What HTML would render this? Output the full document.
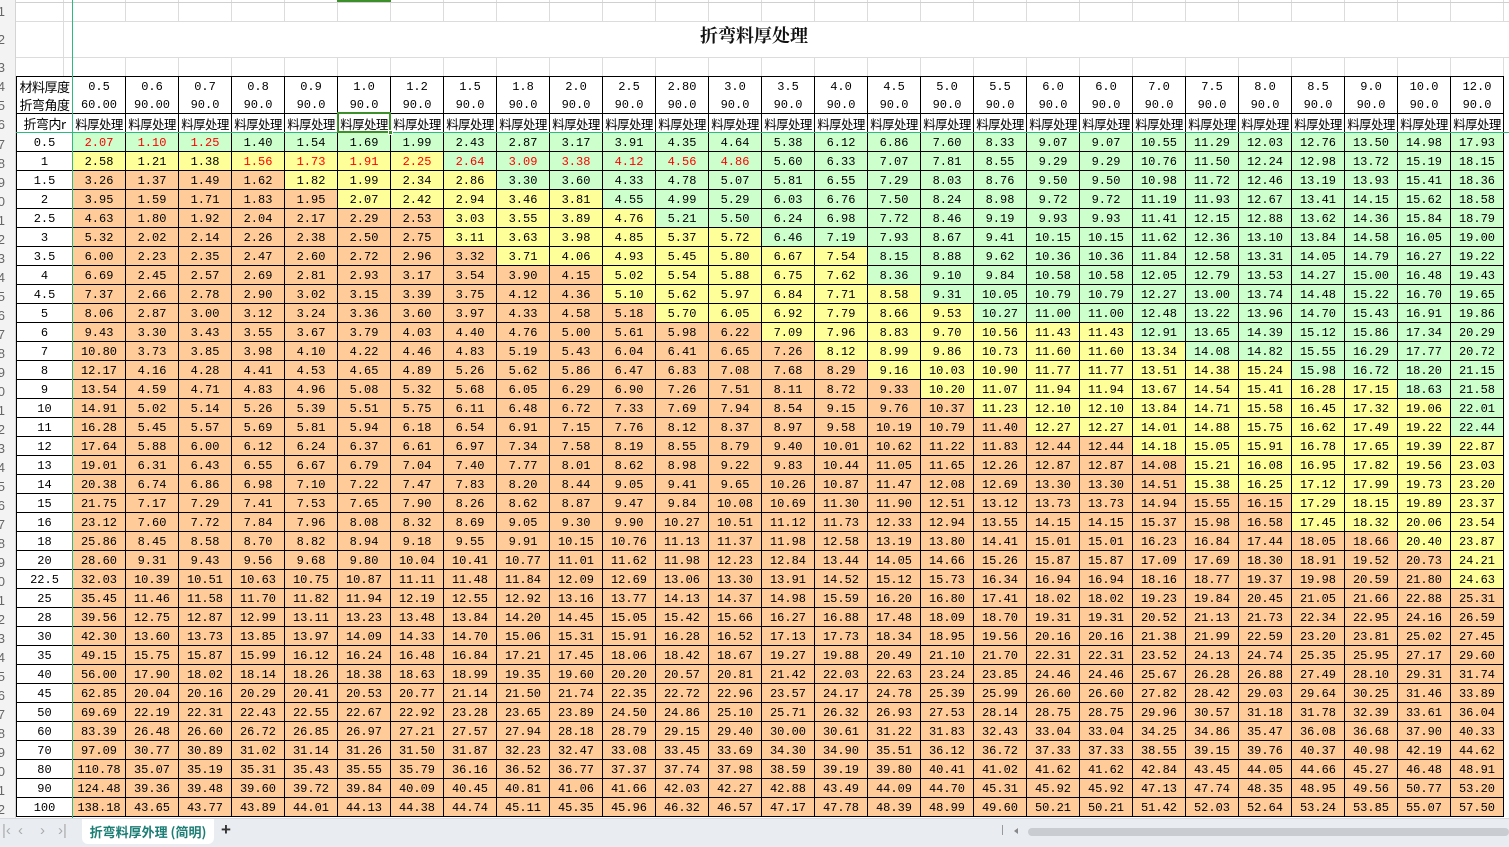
<!DOCTYPE html>
<html><head><meta charset="utf-8">
<style>
*{margin:0;padding:0;box-sizing:border-box}
body{width:1509px;height:847px;overflow:hidden;background:#fff;position:relative;font-family:"Liberation Mono","Noto Sans CJK SC",monospace}
.rh{position:absolute;left:0;top:0;width:16px;height:818px;background:#f3f3f3;border-right:1px solid #d4d4d4;overflow:hidden}
.rh div{position:absolute;left:-9px;width:14px;height:19px;font:13px "Liberation Sans",sans-serif;color:#666;text-align:right;line-height:19px}
.topgrid{position:absolute;left:16px;top:0;width:1493px;height:77px;
background:
linear-gradient(#fff,#fff) 56px 22px/1440px 35px no-repeat,
repeating-linear-gradient(90deg,transparent 0,transparent 55px,#dcdcdc 55px,#dcdcdc 56px) 1px 0/56px 77px no-repeat,
repeating-linear-gradient(90deg,transparent 0,transparent 52px,#dcdcdc 52px,#dcdcdc 53px) 57px 0/1440px 77px repeat-x;}
.hl{position:absolute;left:16px;width:1493px;height:1px;background:#dcdcdc}
.title{position:absolute;left:16px;top:22px;width:1476px;height:35px;text-align:center;line-height:35px;font:bold 18px "Noto Serif CJK SC","Noto Sans CJK SC",serif;color:#111}
table{position:absolute;left:16px;top:76px;border-collapse:collapse;table-layout:fixed;width:1487px}
td,th{border:1px solid #000;padding:2px 0 0;text-align:center;font-size:12px;font-weight:normal;white-space:nowrap;overflow:hidden;line-height:16px;color:#000}
th{background:#fff;font-family:"Liberation Mono","Noto Sans CJK SC",monospace}
tr{height:19px}
tr.h1 td,tr.h1 th{border-bottom:none}
tr.h2 td,tr.h2 th{border-top:none}
tr.h1,tr.h2{height:18.5px}
.lb{font-family:"Noto Sans CJK SC",sans-serif;font-size:13px;letter-spacing:-0.5px}
tr.h3 td{font-family:"Noto Sans CJK SC",sans-serif;font-size:12.5px;letter-spacing:-0.6px}
tbody td{background:#FFCC99}
td.r{color:#f00}
.r0 td{background:#CCFFCC}
.r1 td{background:#FFFF99}.r1 td:nth-child(n+9){background:#CCFFCC}
.r2 td:nth-child(n+6){background:#FFFF99}.r2 td:nth-child(n+10){background:#CCFFCC}
.r3 td:nth-child(n+7){background:#FFFF99}.r3 td:nth-child(n+12){background:#CCFFCC}
.r4 td:nth-child(n+9){background:#FFFF99}.r4 td:nth-child(n+13){background:#CCFFCC}
.r5 td:nth-child(n+9){background:#FFFF99}.r5 td:nth-child(n+15){background:#CCFFCC}
.r6 td:nth-child(n+10){background:#FFFF99}.r6 td:nth-child(n+17){background:#CCFFCC}
.r7 td:nth-child(n+12){background:#FFFF99}.r7 td:nth-child(n+17){background:#CCFFCC}
.r8 td:nth-child(n+12){background:#FFFF99}.r8 td:nth-child(n+18){background:#CCFFCC}
.r9 td:nth-child(n+13){background:#FFFF99}.r9 td:nth-child(n+19){background:#CCFFCC}
.r10 td:nth-child(n+15){background:#FFFF99}.r10 td:nth-child(n+22){background:#CCFFCC}
.r11 td:nth-child(n+16){background:#FFFF99}.r11 td:nth-child(n+23){background:#CCFFCC}
.r12 td:nth-child(n+17){background:#FFFF99}.r12 td:nth-child(n+25){background:#CCFFCC}
.r13 td:nth-child(n+18){background:#FFFF99}.r13 td:nth-child(n+27){background:#CCFFCC}
.r14 td:nth-child(n+19){background:#FFFF99}.r14 td:nth-child(n+28){background:#CCFFCC}
.r15 td:nth-child(n+20){background:#FFFF99}.r15 td:nth-child(n+28){background:#CCFFCC}
.r16 td:nth-child(n+22){background:#FFFF99}
.r17 td:nth-child(n+23){background:#FFFF99}
.r18 td:nth-child(n+23){background:#FFFF99}
.r19 td:nth-child(n+25){background:#FFFF99}
.r20 td:nth-child(n+25){background:#FFFF99}
.r21 td:nth-child(n+27){background:#FFFF99}
.r22 td:nth-child(n+28){background:#FFFF99}
.r23 td:nth-child(n+28){background:#FFFF99}
.fv{position:absolute;left:72px;top:0;width:1px;height:818px;background:#2fb980}
.fh{position:absolute;left:16px;top:132px;width:1493px;height:1px;background:#2fb980}
.sel{position:absolute;left:337px;top:112px;width:54px;height:21px;border:2px solid #3d8f2c}
.sel i{position:absolute;right:-4px;bottom:-4px;width:5px;height:5px;background:#3d8f2c;border:1px solid #fff}
.csel{position:absolute;left:337px;top:0;width:54px;height:2px;background:#3d8f2c}
.bar{position:absolute;left:0;top:818px;width:1509px;height:29px;background:#e9ecf1;border-top:1px solid #d6d9de}
.tab{position:absolute;left:82px;top:0;width:132px;height:25px;background:#fff;border-radius:0 0 6px 6px;font:bold 13px "Noto Sans CJK SC",sans-serif;color:#1b7d74;line-height:25px;text-align:center}
.nav{position:absolute;top:3px;font:15px "Liberation Sans",sans-serif;color:#aaa}
.plus{position:absolute;left:221px;top:1px;font:bold 17px "Liberation Sans",sans-serif;color:#333}
.sb{position:absolute;left:1028px;top:9px;width:481px;height:8px;background:#c9ccd1;border-radius:4px}
</style></head><body>
<div class="topgrid"></div>
<div class="hl" style="top:2px;background:#d0d0d0"></div>
<div class="hl" style="top:21px"></div>
<div class="hl" style="top:57px"></div>
<div class="title">折弯料厚处理</div>
<div class="csel"></div>
<table>
<colgroup><col style="width:56px"><col span="27" style="width:53px"></colgroup>
<thead>
<tr class="h1"><th class="lb">材料厚度</th><td>0.5</td><td>0.6</td><td>0.7</td><td>0.8</td><td>0.9</td><td>1.0</td><td>1.2</td><td>1.5</td><td>1.8</td><td>2.0</td><td>2.5</td><td>2.80</td><td>3.0</td><td>3.5</td><td>4.0</td><td>4.5</td><td>5.0</td><td>5.5</td><td>6.0</td><td>6.0</td><td>7.0</td><td>7.5</td><td>8.0</td><td>8.5</td><td>9.0</td><td>10.0</td><td>12.0</td></tr>
<tr class="h2"><th class="lb">折弯角度</th><td>60.00</td><td>90.00</td><td>90.0</td><td>90.0</td><td>90.0</td><td>90.0</td><td>90.0</td><td>90.0</td><td>90.0</td><td>90.0</td><td>90.0</td><td>90.0</td><td>90.0</td><td>90.0</td><td>90.0</td><td>90.0</td><td>90.0</td><td>90.0</td><td>90.0</td><td>90.0</td><td>90.0</td><td>90.0</td><td>90.0</td><td>90.0</td><td>90.0</td><td>90.0</td><td>90.0</td></tr>
<tr class="h3"><th class="lb">折弯内r</th><td>料厚处理</td><td>料厚处理</td><td>料厚处理</td><td>料厚处理</td><td>料厚处理</td><td>料厚处理</td><td>料厚处理</td><td>料厚处理</td><td>料厚处理</td><td>料厚处理</td><td>料厚处理</td><td>料厚处理</td><td>料厚处理</td><td>料厚处理</td><td>料厚处理</td><td>料厚处理</td><td>料厚处理</td><td>料厚处理</td><td>料厚处理</td><td>料厚处理</td><td>料厚处理</td><td>料厚处理</td><td>料厚处理</td><td>料厚处理</td><td>料厚处理</td><td>料厚处理</td><td>料厚处理</td></tr>
</thead>
<tbody>
<tr class="r0"><th>0.5</th><td class="r">2.07</td><td class="r">1.10</td><td class="r">1.25</td><td>1.40</td><td>1.54</td><td>1.69</td><td>1.99</td><td>2.43</td><td>2.87</td><td>3.17</td><td>3.91</td><td>4.35</td><td>4.64</td><td>5.38</td><td>6.12</td><td>6.86</td><td>7.60</td><td>8.33</td><td>9.07</td><td>9.07</td><td>10.55</td><td>11.29</td><td>12.03</td><td>12.76</td><td>13.50</td><td>14.98</td><td>17.93</td></tr>
<tr class="r1"><th>1</th><td>2.58</td><td>1.21</td><td>1.38</td><td class="r">1.56</td><td class="r">1.73</td><td class="r">1.91</td><td class="r">2.25</td><td class="r">2.64</td><td class="r">3.09</td><td class="r">3.38</td><td class="r">4.12</td><td class="r">4.56</td><td class="r">4.86</td><td>5.60</td><td>6.33</td><td>7.07</td><td>7.81</td><td>8.55</td><td>9.29</td><td>9.29</td><td>10.76</td><td>11.50</td><td>12.24</td><td>12.98</td><td>13.72</td><td>15.19</td><td>18.15</td></tr>
<tr class="r2"><th>1.5</th><td>3.26</td><td>1.37</td><td>1.49</td><td>1.62</td><td>1.82</td><td>1.99</td><td>2.34</td><td>2.86</td><td>3.30</td><td>3.60</td><td>4.33</td><td>4.78</td><td>5.07</td><td>5.81</td><td>6.55</td><td>7.29</td><td>8.03</td><td>8.76</td><td>9.50</td><td>9.50</td><td>10.98</td><td>11.72</td><td>12.46</td><td>13.19</td><td>13.93</td><td>15.41</td><td>18.36</td></tr>
<tr class="r3"><th>2</th><td>3.95</td><td>1.59</td><td>1.71</td><td>1.83</td><td>1.95</td><td>2.07</td><td>2.42</td><td>2.94</td><td>3.46</td><td>3.81</td><td>4.55</td><td>4.99</td><td>5.29</td><td>6.03</td><td>6.76</td><td>7.50</td><td>8.24</td><td>8.98</td><td>9.72</td><td>9.72</td><td>11.19</td><td>11.93</td><td>12.67</td><td>13.41</td><td>14.15</td><td>15.62</td><td>18.58</td></tr>
<tr class="r4"><th>2.5</th><td>4.63</td><td>1.80</td><td>1.92</td><td>2.04</td><td>2.17</td><td>2.29</td><td>2.53</td><td>3.03</td><td>3.55</td><td>3.89</td><td>4.76</td><td>5.21</td><td>5.50</td><td>6.24</td><td>6.98</td><td>7.72</td><td>8.46</td><td>9.19</td><td>9.93</td><td>9.93</td><td>11.41</td><td>12.15</td><td>12.88</td><td>13.62</td><td>14.36</td><td>15.84</td><td>18.79</td></tr>
<tr class="r5"><th>3</th><td>5.32</td><td>2.02</td><td>2.14</td><td>2.26</td><td>2.38</td><td>2.50</td><td>2.75</td><td>3.11</td><td>3.63</td><td>3.98</td><td>4.85</td><td>5.37</td><td>5.72</td><td>6.46</td><td>7.19</td><td>7.93</td><td>8.67</td><td>9.41</td><td>10.15</td><td>10.15</td><td>11.62</td><td>12.36</td><td>13.10</td><td>13.84</td><td>14.58</td><td>16.05</td><td>19.00</td></tr>
<tr class="r6"><th>3.5</th><td>6.00</td><td>2.23</td><td>2.35</td><td>2.47</td><td>2.60</td><td>2.72</td><td>2.96</td><td>3.32</td><td>3.71</td><td>4.06</td><td>4.93</td><td>5.45</td><td>5.80</td><td>6.67</td><td>7.54</td><td>8.15</td><td>8.88</td><td>9.62</td><td>10.36</td><td>10.36</td><td>11.84</td><td>12.58</td><td>13.31</td><td>14.05</td><td>14.79</td><td>16.27</td><td>19.22</td></tr>
<tr class="r7"><th>4</th><td>6.69</td><td>2.45</td><td>2.57</td><td>2.69</td><td>2.81</td><td>2.93</td><td>3.17</td><td>3.54</td><td>3.90</td><td>4.15</td><td>5.02</td><td>5.54</td><td>5.88</td><td>6.75</td><td>7.62</td><td>8.36</td><td>9.10</td><td>9.84</td><td>10.58</td><td>10.58</td><td>12.05</td><td>12.79</td><td>13.53</td><td>14.27</td><td>15.00</td><td>16.48</td><td>19.43</td></tr>
<tr class="r8"><th>4.5</th><td>7.37</td><td>2.66</td><td>2.78</td><td>2.90</td><td>3.02</td><td>3.15</td><td>3.39</td><td>3.75</td><td>4.12</td><td>4.36</td><td>5.10</td><td>5.62</td><td>5.97</td><td>6.84</td><td>7.71</td><td>8.58</td><td>9.31</td><td>10.05</td><td>10.79</td><td>10.79</td><td>12.27</td><td>13.00</td><td>13.74</td><td>14.48</td><td>15.22</td><td>16.70</td><td>19.65</td></tr>
<tr class="r9"><th>5</th><td>8.06</td><td>2.87</td><td>3.00</td><td>3.12</td><td>3.24</td><td>3.36</td><td>3.60</td><td>3.97</td><td>4.33</td><td>4.58</td><td>5.18</td><td>5.70</td><td>6.05</td><td>6.92</td><td>7.79</td><td>8.66</td><td>9.53</td><td>10.27</td><td>11.00</td><td>11.00</td><td>12.48</td><td>13.22</td><td>13.96</td><td>14.70</td><td>15.43</td><td>16.91</td><td>19.86</td></tr>
<tr class="r10"><th>6</th><td>9.43</td><td>3.30</td><td>3.43</td><td>3.55</td><td>3.67</td><td>3.79</td><td>4.03</td><td>4.40</td><td>4.76</td><td>5.00</td><td>5.61</td><td>5.98</td><td>6.22</td><td>7.09</td><td>7.96</td><td>8.83</td><td>9.70</td><td>10.56</td><td>11.43</td><td>11.43</td><td>12.91</td><td>13.65</td><td>14.39</td><td>15.12</td><td>15.86</td><td>17.34</td><td>20.29</td></tr>
<tr class="r11"><th>7</th><td>10.80</td><td>3.73</td><td>3.85</td><td>3.98</td><td>4.10</td><td>4.22</td><td>4.46</td><td>4.83</td><td>5.19</td><td>5.43</td><td>6.04</td><td>6.41</td><td>6.65</td><td>7.26</td><td>8.12</td><td>8.99</td><td>9.86</td><td>10.73</td><td>11.60</td><td>11.60</td><td>13.34</td><td>14.08</td><td>14.82</td><td>15.55</td><td>16.29</td><td>17.77</td><td>20.72</td></tr>
<tr class="r12"><th>8</th><td>12.17</td><td>4.16</td><td>4.28</td><td>4.41</td><td>4.53</td><td>4.65</td><td>4.89</td><td>5.26</td><td>5.62</td><td>5.86</td><td>6.47</td><td>6.83</td><td>7.08</td><td>7.68</td><td>8.29</td><td>9.16</td><td>10.03</td><td>10.90</td><td>11.77</td><td>11.77</td><td>13.51</td><td>14.38</td><td>15.24</td><td>15.98</td><td>16.72</td><td>18.20</td><td>21.15</td></tr>
<tr class="r13"><th>9</th><td>13.54</td><td>4.59</td><td>4.71</td><td>4.83</td><td>4.96</td><td>5.08</td><td>5.32</td><td>5.68</td><td>6.05</td><td>6.29</td><td>6.90</td><td>7.26</td><td>7.51</td><td>8.11</td><td>8.72</td><td>9.33</td><td>10.20</td><td>11.07</td><td>11.94</td><td>11.94</td><td>13.67</td><td>14.54</td><td>15.41</td><td>16.28</td><td>17.15</td><td>18.63</td><td>21.58</td></tr>
<tr class="r14"><th>10</th><td>14.91</td><td>5.02</td><td>5.14</td><td>5.26</td><td>5.39</td><td>5.51</td><td>5.75</td><td>6.11</td><td>6.48</td><td>6.72</td><td>7.33</td><td>7.69</td><td>7.94</td><td>8.54</td><td>9.15</td><td>9.76</td><td>10.37</td><td>11.23</td><td>12.10</td><td>12.10</td><td>13.84</td><td>14.71</td><td>15.58</td><td>16.45</td><td>17.32</td><td>19.06</td><td>22.01</td></tr>
<tr class="r15"><th>11</th><td>16.28</td><td>5.45</td><td>5.57</td><td>5.69</td><td>5.81</td><td>5.94</td><td>6.18</td><td>6.54</td><td>6.91</td><td>7.15</td><td>7.76</td><td>8.12</td><td>8.37</td><td>8.97</td><td>9.58</td><td>10.19</td><td>10.79</td><td>11.40</td><td>12.27</td><td>12.27</td><td>14.01</td><td>14.88</td><td>15.75</td><td>16.62</td><td>17.49</td><td>19.22</td><td>22.44</td></tr>
<tr class="r16"><th>12</th><td>17.64</td><td>5.88</td><td>6.00</td><td>6.12</td><td>6.24</td><td>6.37</td><td>6.61</td><td>6.97</td><td>7.34</td><td>7.58</td><td>8.19</td><td>8.55</td><td>8.79</td><td>9.40</td><td>10.01</td><td>10.62</td><td>11.22</td><td>11.83</td><td>12.44</td><td>12.44</td><td>14.18</td><td>15.05</td><td>15.91</td><td>16.78</td><td>17.65</td><td>19.39</td><td>22.87</td></tr>
<tr class="r17"><th>13</th><td>19.01</td><td>6.31</td><td>6.43</td><td>6.55</td><td>6.67</td><td>6.79</td><td>7.04</td><td>7.40</td><td>7.77</td><td>8.01</td><td>8.62</td><td>8.98</td><td>9.22</td><td>9.83</td><td>10.44</td><td>11.05</td><td>11.65</td><td>12.26</td><td>12.87</td><td>12.87</td><td>14.08</td><td>15.21</td><td>16.08</td><td>16.95</td><td>17.82</td><td>19.56</td><td>23.03</td></tr>
<tr class="r18"><th>14</th><td>20.38</td><td>6.74</td><td>6.86</td><td>6.98</td><td>7.10</td><td>7.22</td><td>7.47</td><td>7.83</td><td>8.20</td><td>8.44</td><td>9.05</td><td>9.41</td><td>9.65</td><td>10.26</td><td>10.87</td><td>11.47</td><td>12.08</td><td>12.69</td><td>13.30</td><td>13.30</td><td>14.51</td><td>15.38</td><td>16.25</td><td>17.12</td><td>17.99</td><td>19.73</td><td>23.20</td></tr>
<tr class="r19"><th>15</th><td>21.75</td><td>7.17</td><td>7.29</td><td>7.41</td><td>7.53</td><td>7.65</td><td>7.90</td><td>8.26</td><td>8.62</td><td>8.87</td><td>9.47</td><td>9.84</td><td>10.08</td><td>10.69</td><td>11.30</td><td>11.90</td><td>12.51</td><td>13.12</td><td>13.73</td><td>13.73</td><td>14.94</td><td>15.55</td><td>16.15</td><td>17.29</td><td>18.15</td><td>19.89</td><td>23.37</td></tr>
<tr class="r20"><th>16</th><td>23.12</td><td>7.60</td><td>7.72</td><td>7.84</td><td>7.96</td><td>8.08</td><td>8.32</td><td>8.69</td><td>9.05</td><td>9.30</td><td>9.90</td><td>10.27</td><td>10.51</td><td>11.12</td><td>11.73</td><td>12.33</td><td>12.94</td><td>13.55</td><td>14.15</td><td>14.15</td><td>15.37</td><td>15.98</td><td>16.58</td><td>17.45</td><td>18.32</td><td>20.06</td><td>23.54</td></tr>
<tr class="r21"><th>18</th><td>25.86</td><td>8.45</td><td>8.58</td><td>8.70</td><td>8.82</td><td>8.94</td><td>9.18</td><td>9.55</td><td>9.91</td><td>10.15</td><td>10.76</td><td>11.13</td><td>11.37</td><td>11.98</td><td>12.58</td><td>13.19</td><td>13.80</td><td>14.41</td><td>15.01</td><td>15.01</td><td>16.23</td><td>16.84</td><td>17.44</td><td>18.05</td><td>18.66</td><td>20.40</td><td>23.87</td></tr>
<tr class="r22"><th>20</th><td>28.60</td><td>9.31</td><td>9.43</td><td>9.56</td><td>9.68</td><td>9.80</td><td>10.04</td><td>10.41</td><td>10.77</td><td>11.01</td><td>11.62</td><td>11.98</td><td>12.23</td><td>12.84</td><td>13.44</td><td>14.05</td><td>14.66</td><td>15.26</td><td>15.87</td><td>15.87</td><td>17.09</td><td>17.69</td><td>18.30</td><td>18.91</td><td>19.52</td><td>20.73</td><td>24.21</td></tr>
<tr class="r23"><th>22.5</th><td>32.03</td><td>10.39</td><td>10.51</td><td>10.63</td><td>10.75</td><td>10.87</td><td>11.11</td><td>11.48</td><td>11.84</td><td>12.09</td><td>12.69</td><td>13.06</td><td>13.30</td><td>13.91</td><td>14.52</td><td>15.12</td><td>15.73</td><td>16.34</td><td>16.94</td><td>16.94</td><td>18.16</td><td>18.77</td><td>19.37</td><td>19.98</td><td>20.59</td><td>21.80</td><td>24.63</td></tr>
<tr><th>25</th><td>35.45</td><td>11.46</td><td>11.58</td><td>11.70</td><td>11.82</td><td>11.94</td><td>12.19</td><td>12.55</td><td>12.92</td><td>13.16</td><td>13.77</td><td>14.13</td><td>14.37</td><td>14.98</td><td>15.59</td><td>16.20</td><td>16.80</td><td>17.41</td><td>18.02</td><td>18.02</td><td>19.23</td><td>19.84</td><td>20.45</td><td>21.05</td><td>21.66</td><td>22.88</td><td>25.31</td></tr>
<tr><th>28</th><td>39.56</td><td>12.75</td><td>12.87</td><td>12.99</td><td>13.11</td><td>13.23</td><td>13.48</td><td>13.84</td><td>14.20</td><td>14.45</td><td>15.05</td><td>15.42</td><td>15.66</td><td>16.27</td><td>16.88</td><td>17.48</td><td>18.09</td><td>18.70</td><td>19.31</td><td>19.31</td><td>20.52</td><td>21.13</td><td>21.73</td><td>22.34</td><td>22.95</td><td>24.16</td><td>26.59</td></tr>
<tr><th>30</th><td>42.30</td><td>13.60</td><td>13.73</td><td>13.85</td><td>13.97</td><td>14.09</td><td>14.33</td><td>14.70</td><td>15.06</td><td>15.31</td><td>15.91</td><td>16.28</td><td>16.52</td><td>17.13</td><td>17.73</td><td>18.34</td><td>18.95</td><td>19.56</td><td>20.16</td><td>20.16</td><td>21.38</td><td>21.99</td><td>22.59</td><td>23.20</td><td>23.81</td><td>25.02</td><td>27.45</td></tr>
<tr><th>35</th><td>49.15</td><td>15.75</td><td>15.87</td><td>15.99</td><td>16.12</td><td>16.24</td><td>16.48</td><td>16.84</td><td>17.21</td><td>17.45</td><td>18.06</td><td>18.42</td><td>18.67</td><td>19.27</td><td>19.88</td><td>20.49</td><td>21.10</td><td>21.70</td><td>22.31</td><td>22.31</td><td>23.52</td><td>24.13</td><td>24.74</td><td>25.35</td><td>25.95</td><td>27.17</td><td>29.60</td></tr>
<tr><th>40</th><td>56.00</td><td>17.90</td><td>18.02</td><td>18.14</td><td>18.26</td><td>18.38</td><td>18.63</td><td>18.99</td><td>19.35</td><td>19.60</td><td>20.20</td><td>20.57</td><td>20.81</td><td>21.42</td><td>22.03</td><td>22.63</td><td>23.24</td><td>23.85</td><td>24.46</td><td>24.46</td><td>25.67</td><td>26.28</td><td>26.88</td><td>27.49</td><td>28.10</td><td>29.31</td><td>31.74</td></tr>
<tr><th>45</th><td>62.85</td><td>20.04</td><td>20.16</td><td>20.29</td><td>20.41</td><td>20.53</td><td>20.77</td><td>21.14</td><td>21.50</td><td>21.74</td><td>22.35</td><td>22.72</td><td>22.96</td><td>23.57</td><td>24.17</td><td>24.78</td><td>25.39</td><td>25.99</td><td>26.60</td><td>26.60</td><td>27.82</td><td>28.42</td><td>29.03</td><td>29.64</td><td>30.25</td><td>31.46</td><td>33.89</td></tr>
<tr><th>50</th><td>69.69</td><td>22.19</td><td>22.31</td><td>22.43</td><td>22.55</td><td>22.67</td><td>22.92</td><td>23.28</td><td>23.65</td><td>23.89</td><td>24.50</td><td>24.86</td><td>25.10</td><td>25.71</td><td>26.32</td><td>26.93</td><td>27.53</td><td>28.14</td><td>28.75</td><td>28.75</td><td>29.96</td><td>30.57</td><td>31.18</td><td>31.78</td><td>32.39</td><td>33.61</td><td>36.04</td></tr>
<tr><th>60</th><td>83.39</td><td>26.48</td><td>26.60</td><td>26.72</td><td>26.85</td><td>26.97</td><td>27.21</td><td>27.57</td><td>27.94</td><td>28.18</td><td>28.79</td><td>29.15</td><td>29.40</td><td>30.00</td><td>30.61</td><td>31.22</td><td>31.83</td><td>32.43</td><td>33.04</td><td>33.04</td><td>34.25</td><td>34.86</td><td>35.47</td><td>36.08</td><td>36.68</td><td>37.90</td><td>40.33</td></tr>
<tr><th>70</th><td>97.09</td><td>30.77</td><td>30.89</td><td>31.02</td><td>31.14</td><td>31.26</td><td>31.50</td><td>31.87</td><td>32.23</td><td>32.47</td><td>33.08</td><td>33.45</td><td>33.69</td><td>34.30</td><td>34.90</td><td>35.51</td><td>36.12</td><td>36.72</td><td>37.33</td><td>37.33</td><td>38.55</td><td>39.15</td><td>39.76</td><td>40.37</td><td>40.98</td><td>42.19</td><td>44.62</td></tr>
<tr><th>80</th><td>110.78</td><td>35.07</td><td>35.19</td><td>35.31</td><td>35.43</td><td>35.55</td><td>35.79</td><td>36.16</td><td>36.52</td><td>36.77</td><td>37.37</td><td>37.74</td><td>37.98</td><td>38.59</td><td>39.19</td><td>39.80</td><td>40.41</td><td>41.02</td><td>41.62</td><td>41.62</td><td>42.84</td><td>43.45</td><td>44.05</td><td>44.66</td><td>45.27</td><td>46.48</td><td>48.91</td></tr>
<tr><th>90</th><td>124.48</td><td>39.36</td><td>39.48</td><td>39.60</td><td>39.72</td><td>39.84</td><td>40.09</td><td>40.45</td><td>40.81</td><td>41.06</td><td>41.66</td><td>42.03</td><td>42.27</td><td>42.88</td><td>43.49</td><td>44.09</td><td>44.70</td><td>45.31</td><td>45.92</td><td>45.92</td><td>47.13</td><td>47.74</td><td>48.35</td><td>48.95</td><td>49.56</td><td>50.77</td><td>53.20</td></tr>
<tr><th>100</th><td>138.18</td><td>43.65</td><td>43.77</td><td>43.89</td><td>44.01</td><td>44.13</td><td>44.38</td><td>44.74</td><td>45.11</td><td>45.35</td><td>45.96</td><td>46.32</td><td>46.57</td><td>47.17</td><td>47.78</td><td>48.39</td><td>48.99</td><td>49.60</td><td>50.21</td><td>50.21</td><td>51.42</td><td>52.03</td><td>52.64</td><td>53.24</td><td>53.85</td><td>55.07</td><td>57.50</td></tr>
</tbody></table>
<div class="rh">
<div style="top:2px">1</div><div style="top:30px">2</div><div style="top:58px">3</div><div style="top:77px">4</div><div style="top:96px">5</div><div style="top:115px">6</div>
<div style="top:135px">7</div><div style="top:154px">8</div><div style="top:173px">9</div><div style="top:192px">0</div><div style="top:211px">1</div><div style="top:230px">2</div><div style="top:249px">3</div><div style="top:268px">4</div><div style="top:287px">5</div><div style="top:306px">6</div><div style="top:325px">7</div><div style="top:344px">8</div><div style="top:363px">9</div><div style="top:382px">0</div><div style="top:401px">1</div><div style="top:420px">2</div><div style="top:439px">3</div><div style="top:458px">4</div><div style="top:477px">5</div><div style="top:496px">6</div><div style="top:515px">7</div><div style="top:534px">8</div><div style="top:553px">9</div><div style="top:572px">0</div><div style="top:591px">1</div><div style="top:610px">2</div><div style="top:629px">3</div><div style="top:648px">4</div><div style="top:667px">5</div><div style="top:686px">6</div><div style="top:705px">7</div><div style="top:724px">8</div><div style="top:743px">9</div><div style="top:762px">0</div><div style="top:781px">1</div><div style="top:800px">2</div>
</div>
<div class="fv"></div>
<div class="fh"></div>
<div class="sel"><i></i></div>
<div class="bar">
<span class="nav" style="left:2px">|&lsaquo;</span><span class="nav" style="left:18px">&lsaquo;</span><span class="nav" style="left:40px">&rsaquo;</span><span class="nav" style="left:58px">&rsaquo;|</span>
<div class="tab">折弯料厚外理 (简明)</div>
<span class="plus">+</span>
<span style="position:absolute;left:1002px;top:6px;width:1px;height:10px;background:#999"></span>
<span style="position:absolute;left:1014px;top:9px;width:0;height:0;border-top:3px solid transparent;border-bottom:3px solid transparent;border-right:4px solid #888"></span>
<div class="sb"></div>
</div>
</body></html>
